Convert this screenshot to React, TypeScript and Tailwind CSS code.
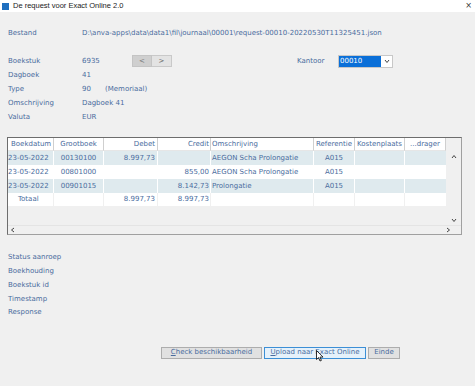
import React from "react";

const cols = "grid grid-cols-[46px_50px_54px_53px_103px_41px_50px_41px]";

function Label({ children }: { children: React.ReactNode }) {
  return <div className="w-[74px] shrink-0">{children}</div>;
}

const rows = [
  { d: "23-05-2022", g: "00130100", deb: "8.997,73", cr: "", o: "AEGON Scha Prolongatie", r: "A015", hl: true },
  { d: "23-05-2022", g: "00801000", deb: "", cr: "855,00", o: "AEGON Scha Prolongatie", r: "A015", hl: false },
  { d: "23-05-2022", g: "00901015", deb: "", cr: "8.142,73", o: "Prolongatie", r: "A015", hl: true },
];

function Chev({ dir }: { dir: "up" | "down" | "left" | "right" }) {
  const p =
    dir === "up" ? "M1 4 L3 1.5 L5 4" : dir === "down" ? "M1 2 L3 4.5 L5 2" : dir === "left" ? "M4 1 L1.5 3 L4 5" : "M2 1 L4.5 3 L2 5";
  return (
    <svg width="6" height="6" viewBox="0 0 6 6">
      <path d={p} fill="none" stroke="#444" strokeWidth="1" />
    </svg>
  );
}

export default function App() {
  return (
    <div
      className="w-[475px] h-[386px] bg-[#f0f0f0] text-[7px] leading-none text-[#4a6c9e] relative overflow-hidden"
      style={{ fontFamily: "'DejaVu Sans', Verdana, sans-serif" }}
    >
      {/* title bar */}
      <div className="h-[12px] bg-white flex items-center pl-[2px] pr-[3px] text-[#1a1a1a]">
        <div className="w-[7px] h-[7px] bg-[#1f6fbf] mr-[4px]" />
        <span className="text-[7.5px]" style={{ fontFamily: "'Liberation Sans', Arial, sans-serif" }}>De request voor Exact Online 2.0</span>
        <span className="ml-auto text-[8px] text-[#333]">×</span>
      </div>

      <div className="pl-[8px]">
        {/* Bestand */}
        <div className="flex items-center h-[14px] mt-[14px]">
          <Label>Bestand</Label>
          <span>D:\anva-apps\data\data1\fil\journaal\00001\request-00010-20220530T11325451.json</span>
        </div>

        {/* Boekstuk */}
        <div className="flex items-center h-[14px] mt-[14px]">
          <Label>Boekstuk</Label>
          <div className="w-[50px]">6935</div>
          <div className="flex h-[12px]">
            <div className="w-[20px] h-[12px] bg-[#cfcfcf] border border-[#c4c4c4] flex items-center justify-center text-[#777]">&lt;</div>
            <div className="w-[20px] h-[12px] bg-[#e3e3e3] border border-[#c9c9c9] border-l-0 flex items-center justify-center text-[#666]">&gt;</div>
          </div>
          <div className="ml-[125px] w-[41px]">Kantoor</div>
          <div className="flex h-[13px] border border-[#c8c8c8] bg-white">
            <div className="w-[42px] bg-[#0a6fd8] text-white flex items-center pl-[1px]">00010</div>
            <div className="w-[11px] flex items-center justify-center"><Chev dir="down" /></div>
          </div>
        </div>
        <div className="flex items-center h-[14px]">
          <Label>Dagboek</Label>
          <span>41</span>
        </div>
        <div className="flex items-center h-[14px]">
          <Label>Type</Label>
          <span className="w-[23px]">90</span>
          <span>(Memoriaal)</span>
        </div>
        <div className="flex items-center h-[14px]">
          <Label>Omschrijving</Label>
          <span>Dagboek 41</span>
        </div>
        <div className="flex items-center h-[14px]">
          <Label>Valuta</Label>
          <span>EUR</span>
        </div>
      </div>

      {/* table */}
      <div className="ml-[7px] mt-[13px] w-[455px] h-[98px] border border-[#6d6d6d] border-r-[#a0a0a0] border-b-[#a0a0a0] flex flex-col bg-[#f0f0f0]">
        <div className="flex flex-1">
          <div className="w-[438px] flex flex-col">
            <div className={`${cols} h-[13px] bg-white`}>
              {[
                ["Boekdatum", "justify-start pl-[3px]"],
                ["Grootboek", "justify-center"],
                ["Debet", "justify-end pr-[2px]"],
                ["Credit", "justify-end pr-[1px]"],
                ["Omschrijving", "justify-start pl-[1px]"],
                ["Referentie", "justify-center"],
                ["Kostenplaats", "justify-center"],
                ["...drager", "justify-center"],
              ].map(([t, c]) => (
                <div key={t} className={`flex items-center ${c} border-r border-[#cfcfcf] border-b border-b-[#e6e6e6] whitespace-nowrap overflow-hidden`}>
                  {t}
                </div>
              ))}
            </div>
            {rows.map((r, i) => (
              <div key={i} className={`${cols} h-[14px] ${r.hl ? "bg-[#dfeaee]" : "bg-white"}`}>
                <div className="flex items-center border-r border-white whitespace-nowrap">{r.d}</div>
                <div className="flex items-center justify-center border-r border-white">{r.g}</div>
                <div className="flex items-center justify-end pr-[2px] border-r border-white">{r.deb}</div>
                <div className="flex items-center justify-end pr-[1px] border-r border-white">{r.cr}</div>
                <div className="flex items-center pl-[1px] border-r border-white whitespace-nowrap">{r.o}</div>
                <div className="flex items-center justify-center border-r border-white">{r.r}</div>
                <div className="border-r border-white" />
                <div />
              </div>
            ))}
            <div className={`${cols} h-[13px] bg-white`}>
              <div className="flex items-center pl-[10px] border-r border-[#f0f0f0]">Totaal</div>
              <div className="border-r border-[#f0f0f0]" />
              <div className="flex items-center justify-end pr-[2px] border-r border-[#f0f0f0]">8.997,73</div>
              <div className="flex items-center justify-end pr-[1px] border-r border-[#f0f0f0]">8.997,73</div>
              <div className="border-r border-[#f0f0f0]" />
              <div className="border-r border-[#f0f0f0]" />
              <div className="border-r border-[#f0f0f0]" />
              <div />
            </div>
          </div>
          <div className="w-[15px] flex flex-col items-center justify-between pt-[16px] pb-[2px]">
            <Chev dir="up" />
            <Chev dir="down" />
          </div>
        </div>
        <div className="h-[9px] flex items-center justify-between px-[2px] border-t border-[#e4e4e4]">
          <Chev dir="left" />
          <div className="mr-[8px]"><Chev dir="right" /></div>
        </div>
      </div>

      {/* status labels */}
      <div className="pl-[8px] mt-[16px]">
        {["Status aanroep", "Boekhouding", "Boekstuk id", "Timestamp", "Response"].map((t) => (
          <div key={t} className="h-[13.75px] flex items-center">{t}</div>
        ))}
      </div>

      {/* buttons */}
      <div className="flex ml-[161px] mt-[27px] gap-[2px] h-[12px]">
        <div className="w-[101px] bg-[#e1e1e1] border border-[#adadad] flex items-center justify-center">
          <span><span className="underline">C</span>heck beschikbaarheid</span>
        </div>
        <div className="w-[102px] bg-[#e5f1fb] border border-[#3c8fd6] flex items-center justify-center">
          <span><span className="underline">U</span>pload naar Exact Online</span>
        </div>
        <div className="w-[32px] bg-[#e1e1e1] border border-[#adadad] flex items-center justify-center">Einde</div>
      </div>

      {/* mouse cursor */}
      <svg className="absolute left-[316px] top-[350px]" width="8" height="12" viewBox="0 0 8 12">
        <path d="M0.5 0.5 L0.5 9.5 L2.6 7.6 L4 11 L5.4 10.4 L4 7.1 L7 7.1 Z" fill="white" stroke="black" strokeWidth="0.8" />
      </svg>
    </div>
  );
}
